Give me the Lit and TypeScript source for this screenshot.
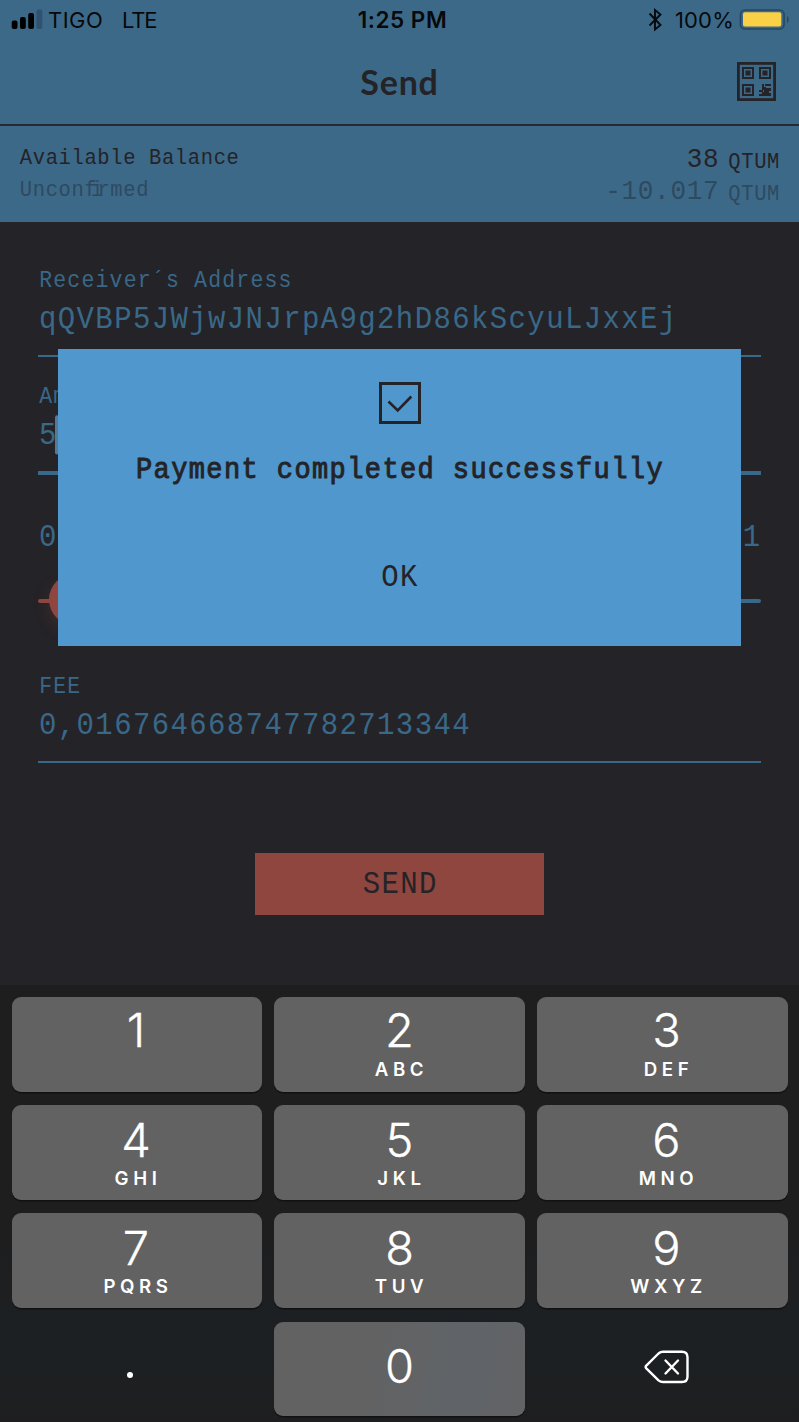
import { LitElement, html, css, svg } from "lit";
import { customElement } from "lit/decorators.js";

const KEYS = [
  ["1", ""], ["2", "ABC"], ["3", "DEF"],
  ["4", "GHI"], ["5", "JKL"], ["6", "MNO"],
  ["7", "PQRS"], ["8", "TUV"], ["9", "WXYZ"],
];

@customElement("status-bar")
class StatusBar extends LitElement {
  static styles = css`
    :host { display: grid; grid-template-columns: 1fr auto 1fr; height: 40px; line-height: 40px;
      font-family: Inter, sans-serif; font-size: 22px; color: #07090b; white-space: pre; }
    .left { display: flex; padding-left: 11px; }
    .signal { width: 32px; height: 40px; margin-right: 5px; }
    .carrier { letter-spacing: 0.5px; width: 74px; }
    .net { letter-spacing: -1.1px; }
    .time { font-weight: 600; font-size: 22.5px; letter-spacing: 0.5px; margin-left: 6px; }
    .right { display: flex; justify-content: flex-end; padding-right: 8px; }
    .bt { width: 16px; height: 40px; margin-right: 12px; }
    .pct { letter-spacing: 0.2px; }
    .batt { width: 52px; height: 40px; margin-left: 5px; }
  `;
  render() {
    return html`
      <div class="left">
        <svg class="signal" viewBox="0 0 32 40">
          <rect x="0.7" y="20.5" width="5.8" height="8.5" rx="2"/>
          <rect x="9" y="17" width="5.8" height="12" rx="2"/>
          <rect x="17.2" y="13" width="5.8" height="16" rx="2"/>
          <rect x="25.5" y="9.5" width="5.8" height="19.5" rx="2" fill="#2f536e"/>
        </svg>
        <span class="carrier">TIGO</span><span class="net">LTE</span>
      </div>
      <div class="time">1:25 PM</div>
      <div class="right">
        <svg class="bt" viewBox="0 0 16 40" fill="none" stroke="#07090b" stroke-width="1.900">
          <path d="M2.500 13.500L13.500 25L8 29.500V10L13.500 14.500L2.500 25.500"/>
        </svg>
        <span class="pct">100%</span>
        <svg class="batt" viewBox="0 0 52 40">
          <rect x="1.500" y="10" width="43.600" height="19" rx="4.500" fill="none" stroke="#264760" stroke-width="1.600"/>
          <rect x="4" y="12.300" width="38.300" height="14.200" rx="2" fill="#fad047"/>
          <path d="M48 16c2.300 1.500 2.300 5.500 0 7z" fill="#264760"/>
        </svg>
      </div>`;
  }
}

@customElement("number-pad")
class NumberPad extends LitElement {
  static styles = css`
    :host { display: grid; box-sizing: border-box; height: 437px; padding: 12px 11px 6px 12px;
      grid-template-columns: 250px 251px 251px; grid-template-rows: repeat(4, 94.5px); gap: 13.700px 12px;
      background: linear-gradient(#1e1e1e 0%, #1e1e1f 60%, #1c2023 82%, #1e1e20 100%);
      font-family: Inter, sans-serif; color: #fff; }
    .key { display: flex; flex-direction: column; align-items: center; border-radius: 9px; box-sizing: border-box;
      background: #626262; box-shadow: 0 1.500px 0 #111112; }
    .key:nth-child(3n) { padding-left: 8px; }
    .key:nth-child(3n + 1) { padding-right: 2px; }
    .digit { height: 60px; line-height: 60px; font-size: 47px; font-weight: 300; -webkit-text-stroke: 0.300px #fff; margin-top: 5px; }
    .first .digit { margin-top: 3px; }
    .letters { height: 24px; line-height: 24px; font-size: 18.700px; font-weight: 600; letter-spacing: 4.600px; margin: -3.500px 0 0 4px; }
    .first .letters { margin-top: -2.500px; }
    .plain { background: none; box-shadow: none; }
    .zero { background: linear-gradient(100deg, #626263 40%, #606468 75%, #626365); }
    .zero .digit { margin-top: 14px; }
    .dot { width: 6px; height: 6px; border-radius: 50%; background: #fff; margin: 50px 12px 0 0; }
    .erase { width: 46px; height: 34px; margin: 28px 0 0 1px; }
  `;
  render() {
    return html`
      ${KEYS.map(([d, l], i) => html`<div class="key ${i < 3 ? "first" : ""}">
        <div class="digit">${d}</div><div class="letters">${l}</div></div>`)}
      <div class="key plain"><div class="dot" aria-label="."></div></div>
      <div class="key zero"><div class="digit">0</div></div>
      <div class="key plain">
        <svg class="erase" viewBox="0 0 46 34" fill="none" stroke="#fff" stroke-width="2.400" stroke-linejoin="round" stroke-linecap="round">
          <path d="M2.300 15.600L14.500 3.500Q16.500 1.800 19 1.800H38Q43.500 1.800 43.500 7.300V26.500Q43.500 32 38 32H19Q16.500 32 14.500 30.300L2.300 18.400Q1 17 2.300 15.600Z"/>
          <path d="M21.500 10.500L34 23.500M34 10.500L21.500 23.500"/>
        </svg>
      </div>`;
  }
}

@customElement("payment-dialog")
class PaymentDialog extends LitElement {
  static styles = css`
    :host { display: flex; flex-direction: column; align-items: center; box-sizing: border-box;
      background: #4f97cc; color: #242327; padding-top: 32px;
      font-family: "Liberation Mono", monospace; white-space: pre; }
    .box { width: 44px; height: 44px; }
    .msg { font-size: 27px; letter-spacing: 1.400px; -webkit-text-stroke: 0.900px #242327; transform: scaleY(1.060);
      height: 40px; line-height: 40px; margin: 26px 0 0 1px; }
    .ok { font-size: 29px; letter-spacing: 1.400px; transform: scaleY(1.090); height: 40px; line-height: 40px; margin: 67px 0 0 1px; }
  `;
  render() {
    return html`
      <svg class="box" viewBox="0 0 44 44" fill="none" stroke="#242327">
        <rect x="2.500" y="2.500" width="39" height="39" stroke-width="3"/>
        <path d="M10.500 20.500L19.700 29.500L33.300 15.500" stroke-width="2.600"/>
      </svg>
      <div class="msg">Payment completed successfully</div>
      <div class="ok">OK</div>`;
  }
}

@customElement("app-root")
class AppRoot extends LitElement {
  static styles = css`
    :host { display: block; position: relative; width: 799px; height: 1422px; overflow: hidden;
      background: #242327; color: #3a6888; font-family: "Liberation Mono", monospace; white-space: nowrap; }
    .head { background: #3d6989; color: #242327; height: 222px; }
    .nav { display: grid; grid-template-columns: 1fr auto 1fr; border-bottom: 2px solid #26292f; box-sizing: border-box; height: 86px; }
    .title { grid-column: 2; font-family: Lato, sans-serif; font-weight: 700; font-size: 34px; line-height: 84px; letter-spacing: 0.800px; }
    .qr { justify-self: end; width: 39px; height: 39px; margin: 21.500px 23px 0 0; }
    .balances { display: flex; justify-content: space-between; padding: 17px 19px 0 19.800px; }
    .row { height: 32px; line-height: 32px; font-size: 20.500px; letter-spacing: 0.620px; transform: scaleY(1.080); }
    .amt { display: flex; justify-content: flex-end; }
    .num { font-size: 26px; letter-spacing: 0.700px; }
    .unit { margin: 3px 0 0 9px; }
    .dim { color: #2e4a60; }
    .fi { letter-spacing: -5.830px; }
    .form { padding: 43px 38.500px 0 38px; }
    .field { border-bottom: 2px solid #3a6888; box-sizing: border-box; height: 92px; }
    .label { font-size: 21.500px; letter-spacing: 1.180px; height: 32px; line-height: 32px; margin: 0 0 3px 1.200px; transform: scaleY(1.080); }
    .value { display: flex; font-size: 29px; letter-spacing: 1.380px; height: 40px; line-height: 40px; margin-left: 1px; transform: scaleY(1.090); }
    .amount { margin-top: 24px; height: 94px; border-bottom-width: 4px; }
    .caret { width: 4px; height: 36px; background: #527a99; border-radius: 2px; margin: 1px 0 0 -2.500px; }
    .range { justify-content: space-between; margin-top: 43px; margin-right: -1px; }
    .slider { display: flex; align-items: center; height: 52px; margin-top: 17px; }
    .track { flex: 1; height: 4px; border-radius: 2px; background: #3a6888; }
    .done { flex: 0 0 14px; background: #8f463f; }
    .thumb { width: 51px; height: 51px; margin: -4px 0 0 -3px; border-radius: 50%; background: #8f463f; box-shadow: 0 6px 16px rgba(143, 70, 63, 0.250); }
    .fee { margin-top: 44px; }
    .send { display: flex; justify-content: center; width: 289px; height: 62px; line-height: 62px; margin: 90px auto 0;
      background: #8f463f; color: #242327; font-size: 29px; letter-spacing: 1.400px; }
    .send span { transform: scaleY(1.090); margin: 1px 0 0 2px; }
    .dialog { position: absolute; left: 58px; top: 349px; width: 683px; height: 297px; }
    .pad { position: absolute; left: 0; right: 0; bottom: 0; }
  `;
  render() {
    const finder = (x: number, y: number) => svg`
      <rect x=${x + 1} y=${y + 1} width="10" height="10" fill="none" stroke-width="2"/>
      <rect x=${x + 3.5} y=${y + 3.5} width="5" height="5" fill="#242327" stroke="none"/>`;
    return html`
      <div class="head">
        <status-bar></status-bar>
        <div class="nav">
          <div class="title">Send</div>
          <svg class="qr" viewBox="0 0 39 39" fill="none" stroke="#242327">
            <rect x="1.400" y="1.400" width="36.200" height="36.200" stroke-width="2.800"/>
            ${finder(5, 5)}${finder(22, 5)}${finder(5, 22)}
            <path d="M25 22h2v3h2v3h-3v2h-4v-2h3zM28 22h6v2h-6zM29 26h5v3h-2v2h2v3H22v-2h3v-2h2v-2h2z" fill="#242327" stroke="none"/>
          </svg>
        </div>
        <div class="balances">
          <div>
            <div class="row">Available Balance</div>
            <div class="row dim">Uncon<span class="fi">fi</span>rmed</div>
          </div>
          <div>
            <div class="row amt"><span class="num">38</span><span class="unit">QTUM</span></div>
            <div class="row amt dim"><span class="num">-10.017</span><span class="unit">QTUM</span></div>
          </div>
        </div>
      </div>
      <div class="form">
        <div class="field">
          <div class="label">Receiver´s Address</div>
          <div class="value">qQVBP5JWjwJNJrpA9g2hD86kScyuLJxxEj</div>
        </div>
        <div class="field amount">
          <div class="label">Amount</div>
          <div class="value">5<span class="caret"></span></div>
        </div>
        <div class="value range"><span>0</span><span>1</span></div>
        <div class="slider"><div class="track done"></div><div class="thumb"></div><div class="track"></div></div>
        <div class="field fee">
          <div class="label">FEE</div>
          <div class="value">0,016764668747782713344</div>
        </div>
        <div class="send"><span>SEND</span></div>
      </div>
      <payment-dialog class="dialog"></payment-dialog>
      <number-pad class="pad"></number-pad>`;
  }
}
